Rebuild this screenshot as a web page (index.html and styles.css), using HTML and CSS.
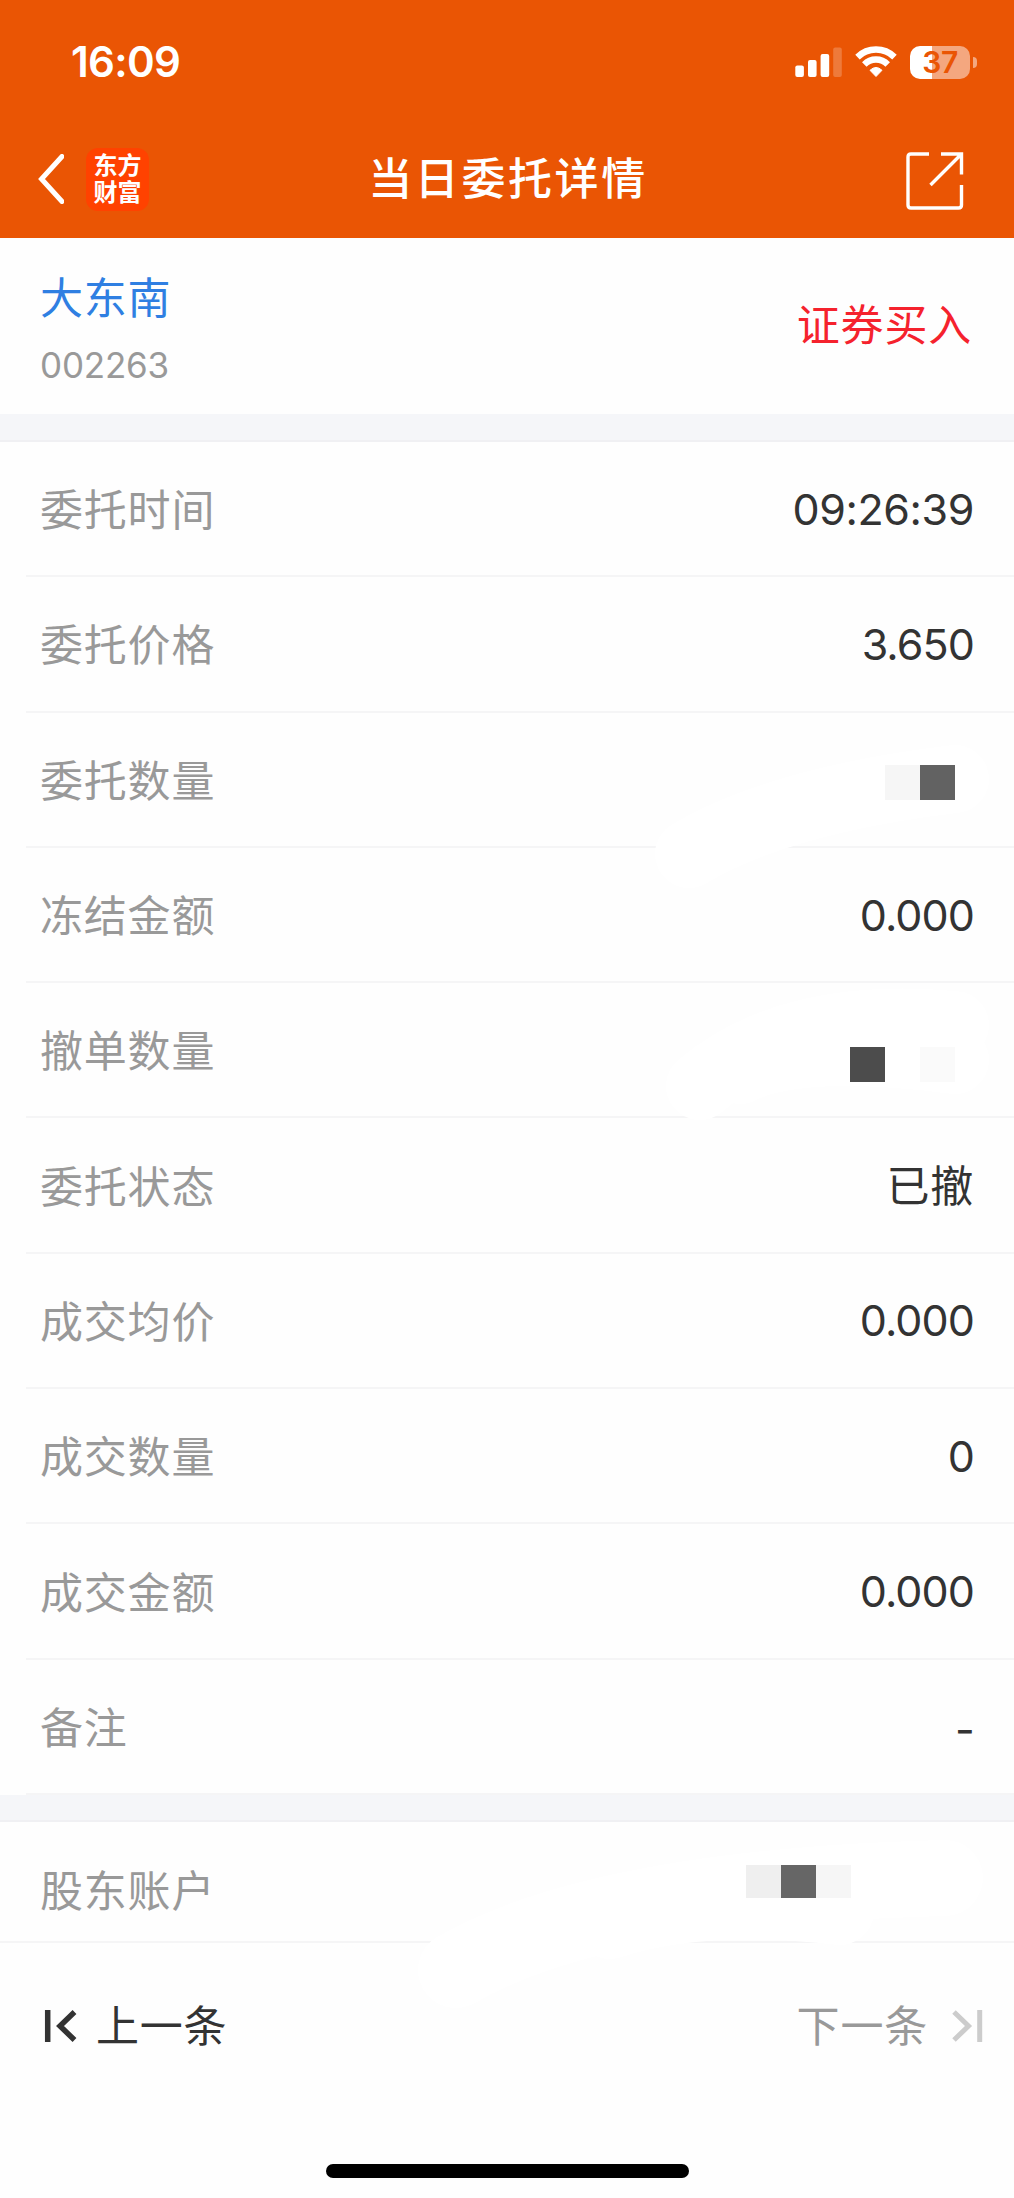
FILE: index.html
```html
<!DOCTYPE html>
<html lang="zh-CN">
<head>
<meta charset="utf-8">
<title>当日委托详情</title>
<link rel="stylesheet" href="styles.css">
</head>
<body>
<div class="screen">
  <header class="header">
    <div class="status">
      <span class="clock">16:09</span>
      <div class="status-icons">
        <svg class="signal" width="47" height="34" viewBox="0 0 47 34" fill="#fff">
          <rect x="0.3" y="20.6" width="8.6" height="11.4" rx="2"/>
          <rect x="13" y="15" width="8.6" height="17" rx="2"/>
          <rect x="25.6" y="9" width="8.6" height="23" rx="2"/>
          <rect x="38.2" y="2.4" width="8.6" height="29.6" rx="2" opacity=".22"/>
        </svg>
        <svg class="wifi" width="42" height="34" viewBox="0 0 42 34">
          <g fill="none" stroke="#fff" stroke-width="6.4">
            <path d="M2.5 12.1A26.5 26.5 0 0 1 39.500 12.1"/>
            <path d="M9.300 19.400A16.500 16.500 0 0 1 32.700 19.400"/>
          </g>
          <path fill="#fff" d="M21 31.500L15 25.300Q21 19.600 27 25.300Z" stroke="#fff" stroke-width="1" stroke-linejoin="round"/>
        </svg>
        <div class="battery"><span class="battery-body">37</span><span class="battery-tip"></span></div>
      </div>
    </div>
    <nav class="titlebar">
      <div class="brand">
        <svg width="26" height="50" viewBox="0 0 26 50" fill="none" stroke="#fff" stroke-width="5" stroke-linecap="round" stroke-linejoin="miter"><path d="M24 2.500L3.500 25L24 47.500"/></svg>
        <div class="logo"><span>东方</span><span>财富</span></div>
      </div>
      <h1 class="title">当日委托详情</h1>
      <svg class="share" width="58" height="58" viewBox="0 0 58 58" fill="none" stroke="#fff" stroke-width="3.400">
        <path d="M23 2H5Q2 2 2 5V53Q2 56 5 56H52.500Q55.500 56 55.500 53V33M35 2H55.500V22.500M54.500 3L24.500 33"/>
      </svg>
    </nav>
  </header>

  <section class="summary">
    <div class="stock"><span class="stock-name">大东南</span><span class="stock-code">002263</span></div>
    <span class="side">证券买入</span>
  </section>
  <div class="divider"></div>

  <section class="details">
    <div class="row"><span class="label">委托时间</span><span class="value value-time">09:26:39</span></div>
    <div class="row"><span class="label">委托价格</span><span class="value">3.650</span></div>
    <div class="row"><span class="label">委托数量</span><span class="mosaic mosaic-order"><i class="tone-light"></i><i class="tone-dark"></i></span></div>
    <div class="row"><span class="label">冻结金额</span><span class="value">0.000</span></div>
    <div class="row"><span class="label">撤单数量</span><span class="mosaic mosaic-cancel"><i class="tone-deep"></i><i></i><i class="tone-faint"></i></span></div>
    <div class="row"><span class="label">委托状态</span><span class="value value-cjk">已撤</span></div>
    <div class="row"><span class="label">成交均价</span><span class="value">0.000</span></div>
    <div class="row"><span class="label">成交数量</span><span class="value">0</span></div>
    <div class="row"><span class="label">成交金额</span><span class="value">0.000</span></div>
    <div class="row"><span class="label">备注</span><span class="value value-empty">-</span></div>
  </section>
  <div class="divider divider-lower"></div>

  <section class="account">
    <span class="label">股东账户</span>
    <span class="mosaic mosaic-account"><i class="tone-pale"></i><i class="tone-mid"></i><i class="tone-light"></i></span>
  </section>

  <footer class="pager">
    <div class="prev">
      <svg width="34" height="34" viewBox="0 0 34 34" fill="none" stroke="#333" stroke-width="5.500"><path d="M4.700 1V33M31.500 3L17 17L31.500 31"/></svg>
      <span class="pager-text">上一条</span>
    </div>
    <div class="next">
      <span class="pager-text">下一条</span>
      <svg width="34" height="34" viewBox="0 0 34 34" fill="none" stroke="#ccc" stroke-width="5"><path d="M3 3L17.500 17L3 31M28.700 1V33"/></svg>
    </div>
  </footer>
  <div class="home"></div>

  <!-- White brush strokes that hide the private values -->
  <svg class="brush" width="1014" height="2198" viewBox="0 0 1014 2198" fill="none" stroke="#fff" stroke-width="68" stroke-linecap="round">
    <path d="M689 854Q780 800 955 779"/>
    <path d="M700 1086Q790 1010 955 1025"/>
    <path d="M740 1070Q800 1040 955 1060"/>
    <path stroke-width="76" d="M456 1970Q600 1887 945 1878"/>
    <path d="M610 1925Q700 1895 840 1911"/>
  </svg>
</div>
</body>
</html>
```
FILE: styles.css
```css
* { box-sizing: border-box; }

body {
  margin: 0;
  background: #fefefe;
  font-family: Inter, "Noto Sans CJK SC", sans-serif;
  color: #333;
}

.screen {
  position: relative;
  display: flex;
  flex-direction: column;
  width: 1014px;
  height: 2198px;
}

.header {
  height: 238px;
  background: #ea5504;
  color: #fff;
}

.status {
  display: flex;
  justify-content: space-between;
  align-items: center;
  height: 124px;
  padding: 0 37px 0 71px;
}

.clock {
  font-size: 42px;
  font-weight: 600;
  line-height: 50px;
  letter-spacing: -0.700px;
}

.status-icons { display: flex; align-items: center; }
.wifi { margin-left: 13px; }

.battery {
  display: flex;
  align-items: center;
  gap: 3px;
  margin-left: 13px;
}

.battery-body {
  width: 60px;
  height: 33px;
  border-radius: 10px;
  background: linear-gradient(to right, #fff 22.5px, #f4a77f 22.5px);
  color: #ea5504;
  font-size: 30px;
  font-weight: 600;
  line-height: 33px;
  text-align: center;
  letter-spacing: -0.500px;
}

.battery-tip {
  width: 4px;
  height: 11px;
  border-radius: 0 4px 4px 0;
  background: #f4a77f;
}

.titlebar {
  display: grid;
  grid-template-columns: 1fr auto 1fr;
  align-items: center;
  height: 110px;
  padding: 0 50px 0 38px;
}

.brand { display: flex; align-items: center; gap: 22px; }

.logo {
  display: flex;
  flex-direction: column;
  align-items: center;
  justify-content: center;
  width: 63px;
  height: 63px;
  padding-bottom: 1px;
  border-radius: 12px;
  background: #ff4200;
  font-size: 24px;
  font-weight: 700;
  line-height: 27px;
}

.title {
  margin: 0 -14px 0 0;
  font-size: 44px;
  font-weight: 500;
  letter-spacing: 2.600px;
  line-height: 60px;
}

.share { justify-self: end; margin-top: 3px; }

.summary {
  display: flex;
  justify-content: space-between;
  align-items: center;
  height: 176px;
  padding: 0 42px 0 40px;
}

.stock { display: flex; flex-direction: column; padding-top: 7px; }

.stock-name {
  color: #2f7fe2;
  font-size: 43px;
  letter-spacing: 0.800px;
  line-height: 62px;
}

.stock-code {
  margin-top: 8px;
  color: #999;
  font-size: 35px;
  letter-spacing: -0.200px;
  line-height: 56px;
}

.side {
  padding-bottom: 8px;
  color: #f5222d;
  font-size: 43px;
  letter-spacing: 0.800px;
}

.divider {
  height: 28px;
  background: #f5f6f9;
  border-bottom: 2px solid #f0f0f3;
}

.divider-lower { height: 27px; }

.details { display: flex; flex-direction: column; }

.row {
  display: flex;
  justify-content: space-between;
  align-items: center;
  height: 135.300px;
  margin-left: 26px;
  padding: 0 40px 0 14px;
  border-bottom: 2px solid #f5f5f6;
}

.label {
  padding-top: 3px;
  color: #999;
  font-size: 43px;
  letter-spacing: 0.800px;
  line-height: 60px;
}

.value {
  font-size: 43px;
  letter-spacing: -0.900px;
  line-height: 60px;
}

.value-time { letter-spacing: -0.400px; }
.value-cjk { padding-top: 2px; letter-spacing: 0.800px; }
.value-empty { padding-top: 5px; }

.mosaic { display: flex; }
.mosaic i { width: 35px; height: 35px; }
.mosaic-order { margin: 6px 19px 0 0; }
.mosaic-cancel { margin: 30px 19px 0 0; }
.mosaic-account { margin: 0 122px 16px 0; }
.mosaic-account i { height: 33px; }
.mosaic, .pager, .label { z-index: 1; }

.tone-light { background: #f6f6f6; }
.tone-faint { background: #fafafa; }
.tone-pale { background: #efefef; }
.tone-mid { background: #666; }
.tone-dark { background: #626262; }
.tone-deep { background: #4c4c4c; }

.account {
  display: flex;
  justify-content: space-between;
  align-items: center;
  height: 121px;
  padding: 16px 41px 0 40px;
  border-bottom: 2px solid #f5f5f6;
}

.pager {
  display: flex;
  justify-content: space-between;
  align-items: center;
  height: 166px;
  padding: 0 29px 0 43px;
  font-size: 43px;
  letter-spacing: 0.800px;
}

.prev, .next { display: flex; align-items: center; }
.prev { gap: 19px; }
.next { gap: 23px; color: #999; }
.pager-text { padding-bottom: 6px; }

.home {
  width: 363px;
  height: 14px;
  margin: 55px auto 0;
  border-radius: 7px;
  background: #000;
}

.brush {
  position: absolute;
  top: 0;
  left: 0;
}
```
